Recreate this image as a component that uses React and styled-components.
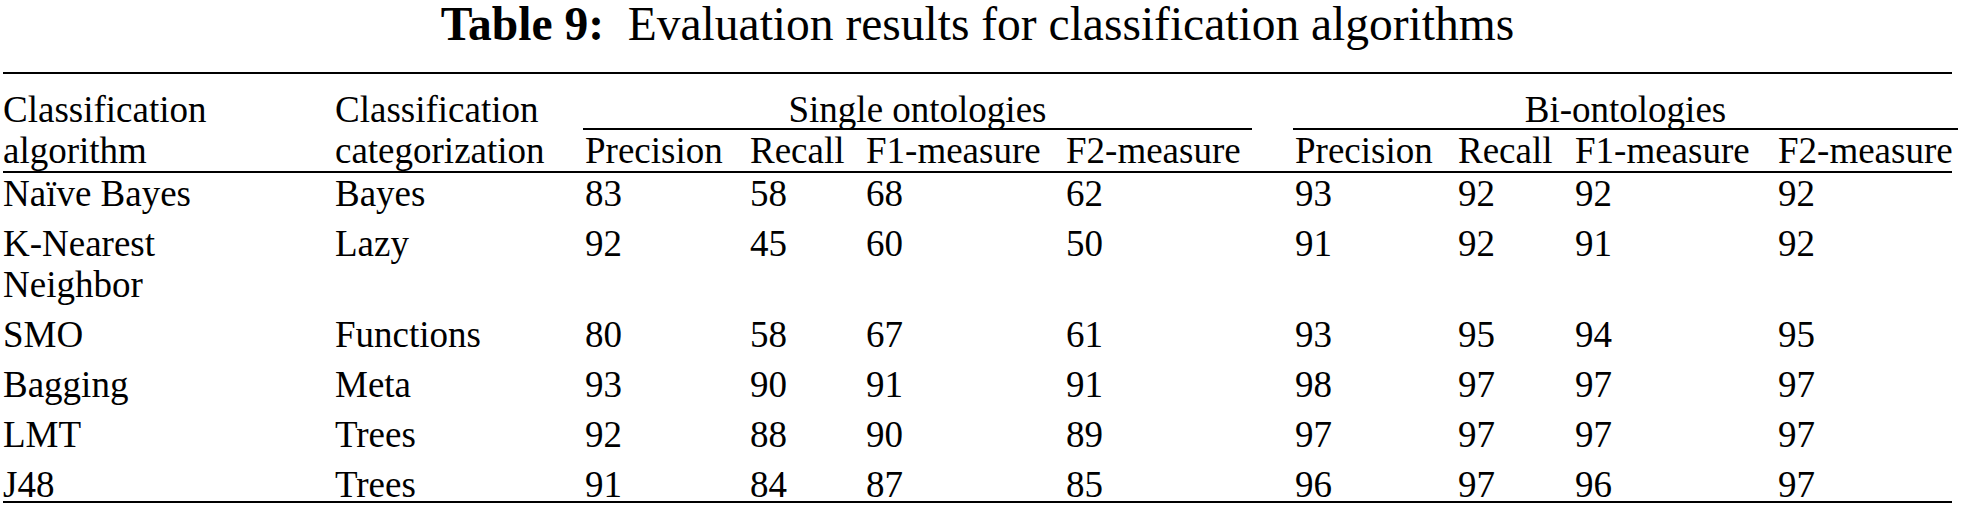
import React from "react";
import styled, { createGlobalStyle } from "styled-components";

const GlobalStyle = createGlobalStyle`
  html, body {
    margin: 0;
    padding: 0;
    background: #ffffff;
  }
  body {
    font-family: "Liberation Serif", "Times New Roman", serif;
    color: #000000;
  }
`;

// column widths taken from the printed table
const COLUMNS = "332px 250px 165px 116px 200px 229px 163px 117px 203px 174px";

const Page = styled.div`
  width: 1962px;
  padding: 0 0 0 3px;
  box-sizing: border-box;
`;

const Caption = styled.div`
  width: 1949px;
  text-align: center;
  font-size: 47.5px;
  line-height: 49px;
  white-space: pre;
  margin-bottom: 23px;
`;

const CaptionLabel = styled.b`
  font-weight: 700;
`;

const Table = styled.div`
  width: 1949px;
  border-top: 2px solid #000;
  border-bottom: 2px solid #000;
  font-size: 37px;
`;

const Head = styled.div`
  display: grid;
  grid-template-columns: ${COLUMNS};
  grid-template-rows: auto auto;
  padding-top: 15px;
  border-bottom: 2px solid #000;
`;

const HeadLabel = styled.div`
  grid-row: 1 / span 2;
  line-height: 41px;
  white-space: pre;
`;

const Group = styled.div`
  grid-row: 1;
  grid-column: ${({ $from }) => `${$from} / span 4`};
  margin-left: -2px;
  margin-right: ${({ $trim }) => $trim}px;
  padding-top: 3px;
  line-height: 36px;
  text-align: center;
  border-bottom: 2px solid #000;
`;

const SubLabel = styled.div`
  grid-row: 2;
  line-height: 41px;
  white-space: nowrap;
`;

const Body = styled.div`
  display: flex;
  flex-direction: column;
  gap: 9px;
`;

const Row = styled.div`
  display: grid;
  grid-template-columns: ${COLUMNS};
  line-height: 41px;
  margin-bottom: ${({ $last }) => ($last ? "-4px" : "0")};
`;

const Cell = styled.div`
  white-space: pre;
`;

const measures = ["Precision", "Recall", "F1-measure", "F2-measure"];

const rows = [
  ["Naïve Bayes", "Bayes", 83, 58, 68, 62, 93, 92, 92, 92],
  ["K-Nearest\nNeighbor", "Lazy", 92, 45, 60, 50, 91, 92, 91, 92],
  ["SMO", "Functions", 80, 58, 67, 61, 93, 95, 94, 95],
  ["Bagging", "Meta", 93, 90, 91, 91, 98, 97, 97, 97],
  ["LMT", "Trees", 92, 88, 90, 89, 97, 97, 97, 97],
  ["J48", "Trees", 91, 84, 87, 85, 96, 97, 96, 97],
];

export default function App() {
  return (
    <Page>
      <GlobalStyle />
      <Caption>
        <CaptionLabel>Table 9:</CaptionLabel>
        {"  Evaluation results for classification algorithms"}
      </Caption>
      <Table>
        <Head>
          <HeadLabel>{"Classification\nalgorithm"}</HeadLabel>
          <HeadLabel>{"Classification\ncategorization"}</HeadLabel>
          <Group $from={3} $trim={43}>
            Single ontologies
          </Group>
          <Group $from={7} $trim={-6}>
            Bi-ontologies
          </Group>
          {[...measures, ...measures].map((m, i) => (
            <SubLabel key={i}>{m}</SubLabel>
          ))}
        </Head>
        <Body>
          {rows.map((r, i) => (
            <Row key={i} $last={i === rows.length - 1}>
              {r.map((v, j) => (
                <Cell key={j}>{v}</Cell>
              ))}
            </Row>
          ))}
        </Body>
      </Table>
    </Page>
  );
}
